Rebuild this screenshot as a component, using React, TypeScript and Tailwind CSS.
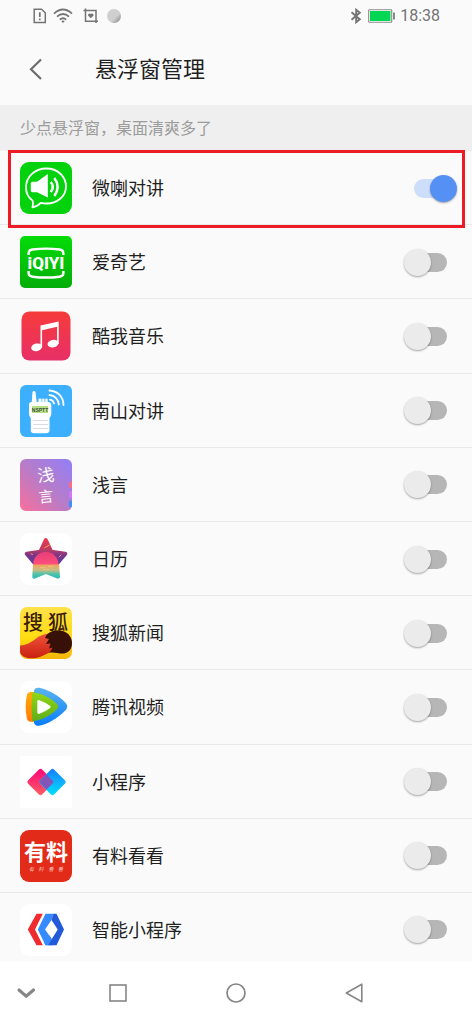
import React, { useState } from "react";

const CJK = 'Roboto, "Noto Sans CJK SC", sans-serif';

const WeilaIcon = () => (
  <svg viewBox="0 0 52 52" className="size-[52px]" aria-hidden="true">
    <rect width="52" height="52" rx="9" fill="#03d20c" />
    <path
      d="M12.6 38.6C8.4 35.5 6 30.5 6 25.4C6 14.5 15 6.5 26.3 6.5S46 14.5 46 24.5S37 41.5 26.5 41.5C24.5 41.5 22.5 41.3 20.8 40.9C18.5 43.2 15.8 45 12.4 45.3C13.3 43.2 13.3 41 12.6 38.6Z"
      fill="none"
      stroke="#fff"
      strokeWidth="1.8"
      strokeLinejoin="round"
    />
    <path
      d="M12.5 19.8H17L27.8 12V35.5L17 30.3H12.5Q10.8 30.3 10.8 28.5V21.6Q10.8 19.8 12.5 19.8Z"
      fill="#fff"
    />
    <path
      d="M30.8 20Q34.8 24.8 30.8 30M34.3 16Q41 24.8 34.3 34"
      fill="none"
      stroke="#fff"
      strokeWidth="2.5"
    />
  </svg>
);

const IqiyiIcon = () => (
  <svg viewBox="0 0 52 52" className="size-[52px]" aria-hidden="true">
    <defs>
      <linearGradient id="iqiyi" x1="0" y1="0" x2="0" y2="1">
        <stop offset="0" stopColor="#05dc08" />
        <stop offset="1" stopColor="#03ad09" />
      </linearGradient>
    </defs>
    <rect width="52" height="52" rx="5" fill="url(#iqiyi)" />
    <path
      d="M8.6 19V17.5Q8.6 14 12.5 13.5Q26 11.8 39.5 13.5Q43.4 14 43.4 17.5V19M8.6 35V37Q8.6 40.2 12.5 40.7Q26 42.4 39.5 40.7Q43.4 40.2 43.4 37V35"
      fill="none"
      stroke="#fff"
      strokeWidth="2.4"
    />
    <text
      x="26"
      y="33"
      textAnchor="middle"
      fontSize="17"
      fontWeight="800"
      fontFamily="Roboto, sans-serif"
      fill="#fff"
    >
      iQIYI
    </text>
  </svg>
);

const MusicIcon = () => (
  <svg viewBox="0 0 52 52" className="size-[52px]" aria-hidden="true">
    <defs>
      <linearGradient id="music" x1="0" y1="0" x2="0" y2="1">
        <stop offset="0" stopColor="#f63b3b" />
        <stop offset="1" stopColor="#e82f68" />
      </linearGradient>
    </defs>
    <rect x="1.5" y="1.5" width="49" height="49" rx="8" fill="url(#music)" />
    <ellipse cx="16.600" cy="37.3" rx="5.5" ry="3.8" fill="#fff" transform="rotate(-12 16.6 37.3)" />
    <ellipse cx="33" cy="33.6" rx="5.5" ry="3.8" fill="#fff" transform="rotate(-12 33 33.6)" />
    <path d="M20.5 15.5L38.7 11.5V34H37.1V16.8L22.1 20.2V37.5H20.5Z" fill="#fff" />
  </svg>
);

const NanshanIcon = () => (
  <svg viewBox="0 0 52 52" className="size-[52px]" aria-hidden="true">
    <rect width="52" height="52" rx="6" fill="#3cb0fd" />
    <g fill="#fff">
      <path d="M12.5 7Q14 5.2 15.5 7L16.8 18H11.7Z" />
      <rect x="18.5" y="13.5" width="3" height="6" rx="1" />
      <rect x="22.2" y="13.5" width="2.2" height="6" rx="1" />
      <rect x="25.2" y="13.5" width="2.4" height="6" rx="1" />
      <path d="M11.5 17H28Q31 17 31.3 20V29Q31.3 31 29.5 33V45Q29.5 48.3 26 48.3H14Q10.8 48.3 10.8 45V33Q9 31 9 29V20Q9 17 11.5 17Z" />
    </g>
    <rect x="12" y="21" width="16" height="7" fill="#b9df86" />
    <text
      x="20"
      y="26.5"
      textAnchor="middle"
      fontSize="5"
      fontWeight="700"
      fontFamily='"Liberation Sans", sans-serif'
      fill="#3c5540"
    >
      NSPTT
    </text>
    <path d="M13 35.5H28M13 39.5H28M13 43.5H28" stroke="#d9dde2" strokeWidth="1" />
    <path
      d="M29.5 5.5C38 6 43.3 12 43.5 20M29.5 10C35 10.5 38.5 14.5 38.8 19.5M30 14.6C32.2 15 33.5 16.5 34 18.5"
      fill="none"
      stroke="#fff"
      strokeWidth="1.8"
      strokeLinecap="round"
    />
  </svg>
);

const QianyanIcon = () => (
  <svg viewBox="0 0 52 52" className="size-[52px]" aria-hidden="true">
    <defs>
      <linearGradient id="qianyan" x1="0" y1="1" x2="1" y2="0">
        <stop offset="0" stopColor="#fa6f9b" />
        <stop offset="0.5" stopColor="#b67cc9" />
        <stop offset="1" stopColor="#917ff8" />
      </linearGradient>
    </defs>
    <rect width="52" height="52" rx="6" fill="url(#qianyan)" />
    <path d="M52 22.5V29H50.5Q49 29 49 27.5V24Q49 22.5 50.5 22.5Z" fill="#fb6c85" />
    <path d="M52 32V39H50.5Q49 39 49 37.5V33.5Q49 32 50.5 32Z" fill="#d673f7" />
    <path d="M52 41.5V46Q52 48 51 48.5Q49 48.5 49 47V43Q49 41.5 50.5 41.5Z" fill="#3d91f3" />
    <g fill="#fff" textAnchor="middle" fontFamily={CJK}>
      <text x="26" y="22.5" fontSize="17" transform="rotate(-6 26 17)">
        浅
      </text>
      <text x="26" y="43" fontSize="15" transform="rotate(-6 26 38)">
        言
      </text>
    </g>
  </svg>
);

const CalendarIcon = () => (
  <svg viewBox="0 0 52 52" className="size-[52px]" aria-hidden="true">
    <defs>
      <linearGradient id="starFill" gradientUnits="userSpaceOnUse" x1="0" y1="5" x2="0" y2="46">
        <stop offset="0" stopColor="#ef3b4c" />
        <stop offset="0.3" stopColor="#b83a68" />
        <stop offset="0.42" stopColor="#7b358c" />
        <stop offset="0.64" stopColor="#5a3d9c" />
        <stop offset="0.64" stopColor="#f2a45e" />
        <stop offset="0.78" stopColor="#c9bd80" />
        <stop offset="0.88" stopColor="#4cc3ab" />
        <stop offset="1" stopColor="#2bb8b8" />
      </linearGradient>
      <linearGradient id="sun" x1="0" y1="0" x2="0" y2="1">
        <stop offset="0" stopColor="#e63e78" />
        <stop offset="1" stopColor="#ff4d7c" />
      </linearGradient>
    </defs>
    <rect width="52" height="52" rx="9" fill="#fff" />
    <path
      d="M25.8 7L31.3 18.8L45.3 20.7L37 30.5L38 43.7L25.800 39L14.3 43.7L15 30.5L6.7 20.7L20.3 18.8Z"
      fill="url(#starFill)"
      stroke="url(#starFill)"
      strokeWidth="4"
      strokeLinejoin="round"
    />
    <path d="M13.2 31.4A12.6 12.6 0 0 1 38.4 31.4Z" fill="url(#sun)" />
    <path
      d="M24.5 14.8L29.5 12M11 20.8L12.5 21.5M41 22L39 24"
      stroke="#f5a04c"
      strokeWidth="1"
      strokeLinecap="round"
    />
    <path d="M20 34.5H25M28 33.5H33M23 36.5H29" stroke="#f6c27b" strokeWidth="0.8" />
  </svg>
);

const SohuIcon = () => (
  <svg viewBox="0 0 52 52" className="size-[52px]" aria-hidden="true">
    <defs>
      <linearGradient id="sohu" x1="0" y1="0" x2="0" y2="1">
        <stop offset="0" stopColor="#ffe14a" />
        <stop offset="0.6" stopColor="#ffdc10" />
        <stop offset="1" stopColor="#f5b50a" />
      </linearGradient>
      <linearGradient id="tail" x1="0" y1="0" x2="0" y2="1">
        <stop offset="0" stopColor="#f0553c" />
        <stop offset="1" stopColor="#c9200f" />
      </linearGradient>
      <clipPath id="sohuClip">
        <rect width="52" height="52" rx="7" />
      </clipPath>
    </defs>
    <g clipPath="url(#sohuClip)">
      <rect width="52" height="52" fill="url(#sohu)" />
      <text y="22.5" textAnchor="middle" fontSize="20" fontWeight="500" fontFamily={CJK} fill="#3a1c08">
        <tspan x="13">搜</tspan>
        <tspan x="38">狐</tspan>
      </text>
      <path
        d="M0 38.5C8 38 13 34 18 30C22 27.5 27 26.5 33 26L36 44C29 44.5 25 48.500 18 50.500C10 52.5 3 51 0 46Z"
        fill="url(#tail)"
      />
      <path
        d="M26.5 28C31 23.5 38 22.5 43 24C49 26 52 31 52 36C52 42 49 45.5 44 46.5C39 47 33 44.500 29 46C31 44 32 42 32.5 40.5L29 41.5L30.5 36.5L26 37L29 32L25 31Z"
        fill="#371108"
      />
    </g>
  </svg>
);

const TencentIcon = () => (
  <svg viewBox="0 0 52 52" className="size-[52px]" aria-hidden="true">
    <defs>
      <linearGradient id="txBlue" x1="0" y1="0" x2="0" y2="1">
        <stop offset="0" stopColor="#5cb4ee" />
        <stop offset="1" stopColor="#087cfb" />
      </linearGradient>
      <linearGradient id="txGreen" x1="0" y1="0" x2="0" y2="1">
        <stop offset="0" stopColor="#92d715" />
        <stop offset="1" stopColor="#5eae1b" />
      </linearGradient>
      <linearGradient id="txOrange" x1="0" y1="0" x2="0" y2="1">
        <stop offset="0" stopColor="#ffae09" />
        <stop offset="1" stopColor="#ff7a08" />
      </linearGradient>
    </defs>
    <rect width="52" height="52" rx="9" fill="#fff" />
    <path
      d="M14 10Q15 6.3 19 6.8C28 8.5 38 14 45.3 21.5Q49 25.5 45.3 29.5C38 37 28 43 19 44.8Q15 45.3 14 41.5Z"
      fill="url(#txBlue)"
    />
    <path
      d="M14 11H10.5Q7.5 11 6.8 14.5Q4.5 26 6.8 37Q7.5 40.8 10.5 40.8H14Z"
      fill="url(#txOrange)"
    />
    <path
      d="M12.3 11.5C21 12 30 16.5 36.5 22.5Q40 25.5 36.5 28.8C30 35 21 39.5 12.3 40.3Q10.8 26 12.3 11.5Z"
      fill="url(#txGreen)"
    />
    <path
      d="M17.3 20.5Q17.5 18.5 19.5 19.2Q25.5 21.5 30 24.7Q31.5 25.8 30 27Q25.5 30.5 19.5 32.8Q17.5 33.3 17.3 31.5Z"
      fill="#fff"
    />
  </svg>
);

const MiniProgramIcon = () => (
  <svg viewBox="0 0 52 52" className="size-[52px]" aria-hidden="true">
    <defs>
      <linearGradient id="miniRed" x1="0" y1="0" x2="1" y2="1">
        <stop offset="0" stopColor="#fc047b" />
        <stop offset="1" stopColor="#ff6060" />
      </linearGradient>
      <linearGradient id="miniBlue" x1="0" y1="0" x2="1" y2="1">
        <stop offset="0" stopColor="#167bff" />
        <stop offset="1" stopColor="#02e4ff" />
      </linearGradient>
    </defs>
    <rect width="52" height="52" rx="2" fill="#fff" />
    <rect x="10.5" y="16" width="20" height="20" rx="2.5" fill="url(#miniRed)" transform="rotate(45 20.5 26)" />
    <rect x="22.5" y="16" width="20" height="20" rx="2.5" fill="url(#miniBlue)" transform="rotate(45 32.5 26)" />
    <path d="M26.5 18.5L33 25Q34 26 33 27L26.5 33.5L20 27Q19 26 20 25Z" fill="#8355b8" />
  </svg>
);

const YouliaoIcon = () => (
  <svg viewBox="0 0 52 52" className="size-[52px]" aria-hidden="true">
    <rect width="52" height="52" rx="9" fill="#e22b19" />
    <g textAnchor="middle" fill="#fff" fontFamily={CJK}>
      <text x="26" y="30" fontSize="22" fontWeight="700">
        有料
      </text>
      <text y="41" fontSize="5" fontStyle="italic" fill="#ffd0c8">
        <tspan x="11.5">有</tspan>
        <tspan x="21">料</tspan>
        <tspan x="31">看</tspan>
        <tspan x="40.5">看</tspan>
      </text>
    </g>
  </svg>
);

const SmartProgramIcon = () => (
  <svg viewBox="0 0 52 52" className="size-[52px]" aria-hidden="true">
    <rect width="52" height="52" rx="9" fill="#fff" />
    <path d="M16.5 9.8H22.8L15 25.5L22.8 41.3H16.5L7.8 25.5Z" fill="#ef2b2f" />
    <path d="M25.5 9.8H33.5L31.5 16L25 25.5L31.5 34.5L33.5 41.3H25.5L17.8 25.5Z" fill="#368aff" />
    <path d="M33.5 9.8H36.5L44 25.5L36.5 41.3H28L37.7 25.5L31.5 16Z" fill="#235ada" />
    <path d="M28 41.3L31.5 34.5L28.8 30.8L24 38.3L25.5 41.3Z" fill="#368aff" />
  </svg>
);

const apps = [
  { id: "weila", name: "微喇对讲", icon: <WeilaIcon />, highlighted: true },
  { id: "iqiyi", name: "爱奇艺", icon: <IqiyiIcon /> },
  { id: "kuwo", name: "酷我音乐", icon: <MusicIcon /> },
  { id: "nanshan", name: "南山对讲", icon: <NanshanIcon /> },
  { id: "qianyan", name: "浅言", icon: <QianyanIcon /> },
  { id: "calendar", name: "日历", icon: <CalendarIcon /> },
  { id: "sohu", name: "搜狐新闻", icon: <SohuIcon /> },
  { id: "tencent", name: "腾讯视频", icon: <TencentIcon /> },
  { id: "mini", name: "小程序", icon: <MiniProgramIcon /> },
  { id: "youliao", name: "有料看看", icon: <YouliaoIcon /> },
  { id: "smart", name: "智能小程序", icon: <SmartProgramIcon /> },
];

const StatusBar = () => (
  <div className="flex h-8 items-center justify-between px-8 text-[#747474]">
    <div className="flex items-center">
      <svg viewBox="0 0 16 16" className="size-4" fill="none" stroke="currentColor" strokeWidth="1.5" aria-hidden="true">
        <path d="M2.2 1.2H9.5L13.3 4.8V14.6H2.2Z" />
        <path d="M7.8 4.2V9M7.8 10.5V12.2" strokeWidth="1.7" />
      </svg>
      <svg viewBox="0 0 20 16" className="ml-[5px] h-4 w-5" fill="none" stroke="currentColor" strokeWidth="1.8" aria-hidden="true">
        <path d="M1 5.6Q10 -2.5 19 5.6M4 8.7Q10 3.3 16 8.7M6.8 11.6Q10 8.8 13.2 11.6" />
        <path d="M8.3 13L10 14.9L11.7 13Q10 11.8 8.3 13Z" fill="currentColor" stroke="none" />
      </svg>
      <svg viewBox="0 0 16 16" className="ml-[10px] size-4" fill="none" stroke="currentColor" strokeWidth="1.5" aria-hidden="true">
        <path d="M0.500 2.500H13V15M2.500 0.500V13.300H15" />
        <path d="M7.8 10.200L5 7.4Q5 5.400 6.8 5.600L7.8 6.1L8.8 5.600Q10.600 5.400 10.600 7.400Z" fill="currentColor" stroke="none" />
      </svg>
      <span className="ml-2 size-[14px] rounded-full bg-linear-to-br from-[#cfcfcf] from-60% to-[#7d7d7d]" />
    </div>
    <div className="flex items-center">
      <svg viewBox="0 0 12 16" className="h-4 w-3" fill="none" stroke="currentColor" strokeWidth="1.9" aria-hidden="true">
        <path d="M1.5 4.2L9.8 11.2L6.2 14.2V1.8L9.8 4.8L1.5 11.8" />
      </svg>
      <svg viewBox="0 0 28 14" className="ml-[6px] h-[14px] w-7" aria-hidden="true">
        <rect x="0.7" y="0.7" width="23" height="12.6" rx="0.5" fill="#fff" stroke="#8a8a8a" strokeWidth="1.1" />
        <rect x="2" y="2" width="20.5" height="10" fill="#02d653" />
        <rect x="25" y="3.5" width="2" height="7" fill="#8a8a8a" />
      </svg>
      <span className="ml-1 text-base leading-4">18:38</span>
    </div>
  </div>
);

const Switch = ({ id, checked, onChange }: { id: string; checked: boolean; onChange: () => void }) => (
  <input
    id={id}
    type="checkbox"
    role="switch"
    checked={checked}
    onChange={onChange}
    className="relative h-[27px] w-[53px] shrink-0 cursor-pointer appearance-none before:absolute before:top-1 before:left-[10px] before:h-[19px] before:w-[33px] before:rounded-full before:bg-[#b6b6b6] before:content-[''] after:absolute after:top-0 after:left-0 after:size-[27px] after:rounded-full after:bg-[#ebebeb] after:shadow-[0_1px_2px_rgba(0,0,0,0.35)] after:content-[''] checked:before:bg-[#cddefb] checked:after:left-[26px] checked:after:bg-[#5590f4]"
  />
);

const NavBar = () => (
  <nav className="flex h-[63px] shrink-0 items-center bg-white text-[#868686]">
    <button type="button" aria-label="收起" className="w-[12.5%] pl-4">
      <svg viewBox="0 0 20 20" className="size-5" fill="none" stroke="currentColor" strokeWidth="3.2" strokeLinecap="round" aria-hidden="true">
        <path d="M3 7L10.2 13.2L17.5 7" />
      </svg>
    </button>
    <button type="button" aria-label="最近任务" className="flex w-1/4 justify-center">
      <svg viewBox="0 0 20 20" className="size-5" fill="none" stroke="currentColor" strokeWidth="1.6" aria-hidden="true">
        <rect x="2" y="2" width="16" height="16" />
      </svg>
    </button>
    <button type="button" aria-label="主屏幕" className="flex w-1/4 justify-center">
      <svg viewBox="0 0 20 20" className="size-5" fill="none" stroke="currentColor" strokeWidth="1.7" aria-hidden="true">
        <circle cx="10" cy="10" r="9" />
      </svg>
    </button>
    <button type="button" aria-label="返回" className="flex w-1/4 justify-center">
      <svg viewBox="0 0 20 20" className="size-5" fill="none" stroke="currentColor" strokeWidth="1.6" strokeLinejoin="round" aria-hidden="true">
        <path d="M17.8 1.2V18.8L2.3 10Z" />
      </svg>
    </button>
  </nav>
);

const App = () => {
  const [enabled, setEnabled] = useState<string[]>(["weila"]);

  const toggle = (id: string) =>
    setEnabled((prev) => (prev.includes(id) ? prev.filter((x) => x !== id) : [...prev, id]));

  return (
    <div className="flex min-h-screen flex-col bg-[#fafafa] font-[Roboto,'Noto_Sans_CJK_SC',sans-serif] text-[#1f1f1f]">
      <StatusBar />
      <header className="flex h-[73px] items-center pl-6">
        <button type="button" aria-label="返回" className="text-[#6c6c6c]">
          <svg viewBox="0 0 24 24" className="size-6" fill="none" stroke="currentColor" strokeWidth="2.2" aria-hidden="true">
            <path d="M17 2.5L7 12.3L17 22" />
          </svg>
        </button>
        <h1 className="ml-[47px] pt-0.5 text-[22px] leading-8">悬浮窗管理</h1>
      </header>
      <p className="flex h-[46px] items-center bg-[#efefef] px-5 pt-0.5 text-base text-[#9b9b9b]">
        少点悬浮窗，桌面清爽多了
      </p>
      <ul className="flex grow flex-col">
        {apps.map((app) => (
          <li
            key={app.id}
            className="relative flex grow items-center border-b border-[#e9e9e9] pt-[11px] pr-[15px] pb-[10px] pl-5 last:border-b-0 last:pb-[5px]"
          >
            {app.icon}
            <label htmlFor={app.id} className="ml-5 flex-1 pt-0.5 text-lg leading-7">
              {app.name}
            </label>
            <Switch id={app.id} checked={enabled.includes(app.id)} onChange={() => toggle(app.id)} />
            {app.highlighted && (
              <div className="pointer-events-none absolute -top-px right-[7px] -bottom-1 left-2 z-10 border-3 border-[#ed1c24]" />
            )}
          </li>
        ))}
      </ul>
      <NavBar />
    </div>
  );
};

export default App;
